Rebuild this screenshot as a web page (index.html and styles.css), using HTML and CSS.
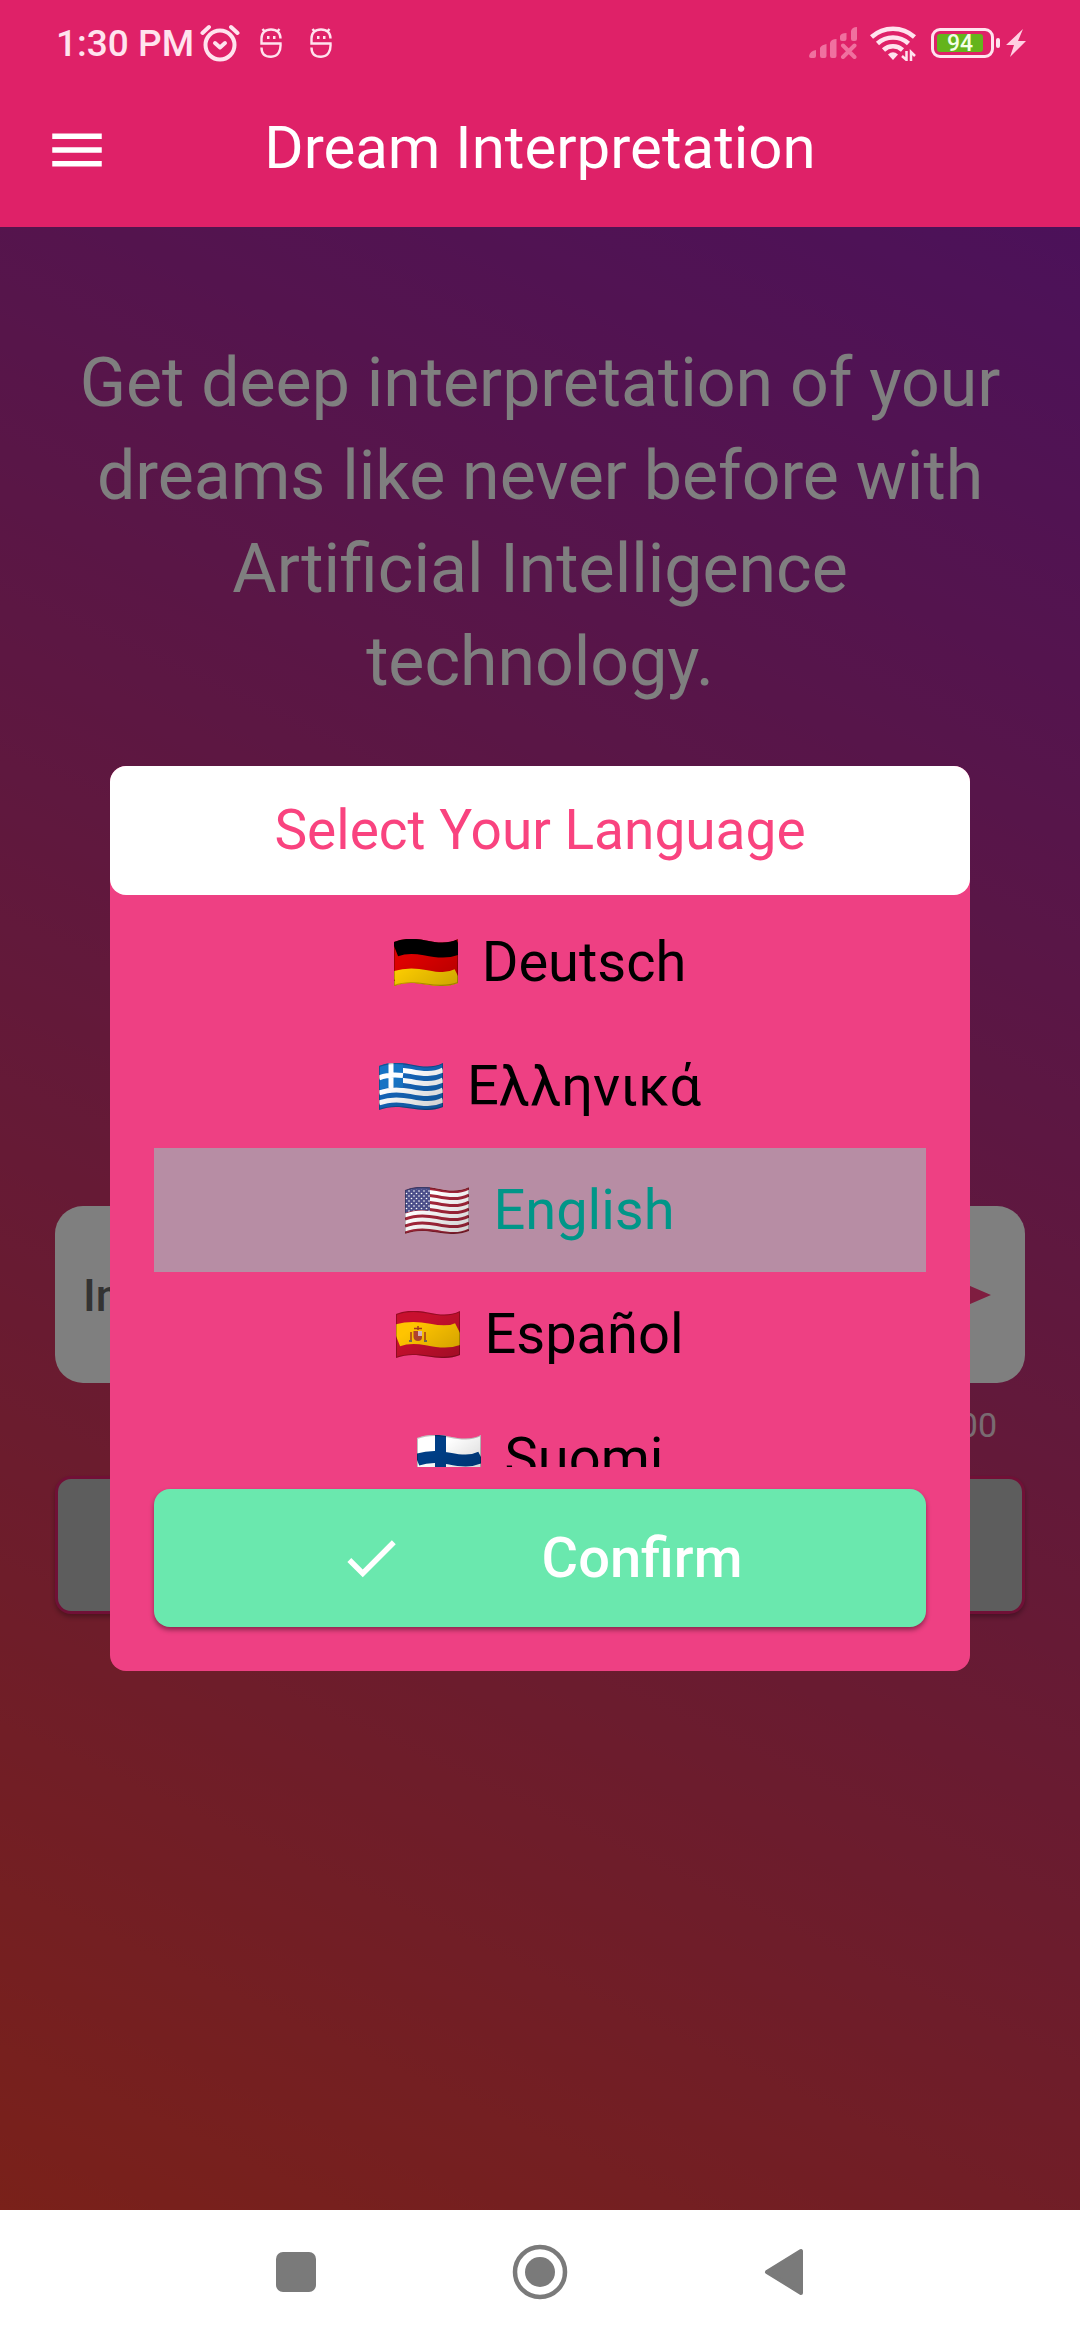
FILE: index.html
```html
<!DOCTYPE html>
<html lang="en">
<head>
    <meta charset="UTF-8">
    <meta name="viewport" content="width=device-width, initial-scale=1.0">
    <title>Dream Interpretation</title>
    <link rel="stylesheet" href="styles.css">
</head>
<body>
    <!-- Shared shapes for the flags -->
    <svg class="defs" aria-hidden="true">
        <defs>
            <path id="wave" d="M0 3C10 -1 20 -1 32 1.5S54 5 64 0"/>
            <clipPath id="flagClip">
                <path d="M0 3C10 -1 20 -1 32 1.5S54 5 64 0V44C54 48 44 47.5 32 45.5S10 43 0 47Z"/>
            </clipPath>
            <linearGradient id="flagShade" x1="0" y1="0" x2="1" y2="1">
                <stop offset="0.3" stop-color="#000" stop-opacity="0"/>
                <stop offset="1" stop-color="#000" stop-opacity="0.2"/>
            </linearGradient>
            <pattern id="stars" width="5" height="5" patternUnits="userSpaceOnUse">
                <circle cx="1.5" cy="1.5" r="0.8" fill="#fff"/>
                <circle cx="4" cy="4" r="0.8" fill="#fff"/>
            </pattern>
            <g id="shade">
                <rect width="64" height="47" fill="url(#flagShade)"/>
                <path d="M0 3C10 -1 20 -1 32 1.5S54 5 64 0V44C54 48 44 47.5 32 45.5S10 43 0 47Z" fill="none" stroke="#000" stroke-opacity="0.25" stroke-width="2"/>
            </g>
        </defs>
    </svg>

    <header class="top">
        <div class="status-bar">
            <div class="status-left">
                <span class="time">1:30 PM</span>
                <svg class="icon-alarm" viewBox="0 0 40 38" fill="none" stroke="#ffe3ee" stroke-linecap="round" aria-hidden="true">
                    <circle cx="20" cy="21" r="14.5" stroke-width="4"/>
                    <path d="M2.5 9L9 3M37.5 9L31 3" stroke-width="4"/>
                    <path d="M15 19L20 23.5L25 19" stroke-width="4" stroke-linejoin="round"/>
                </svg>
                <svg class="icon-bot" viewBox="0 0 22 30" fill="none" stroke="#ffe3ee" stroke-width="2.4" aria-hidden="true">
                    <path d="M20.5 10.5C20.5 5 17 1.5 11 1.5S1.5 5 1.5 10.5V15.5H20.5C21 23 18 28.8 11 28.8S1.5 25 1.5 19.5M2.5 1L5 4M19.5 1L17 4"/>
                    <path d="M7 9.5h2.5M13 9.5h2.5" stroke-width="3"/>
                </svg>
                <svg class="icon-bot" viewBox="0 0 22 30" fill="none" stroke="#ffe3ee" stroke-width="2.4" aria-hidden="true">
                    <path d="M20.5 10.5C20.5 5 17 1.5 11 1.5S1.5 5 1.5 10.5V15.5H20.5C21 23 18 28.8 11 28.8S1.5 25 1.5 19.5M2.5 1L5 4M19.5 1L17 4"/>
                    <path d="M7 9.5h2.5M13 9.5h2.5" stroke-width="3"/>
                </svg>
            </div>
            <div class="status-right">
                <svg class="icon-signal" viewBox="0 0 48 32" fill="#f0709f" aria-hidden="true">
                    <path d="M0 29Q1 24 7 23V29Q7 31 5 31H2Q0 31 0 29ZM11 21Q12 18 17.5 17V29Q17.5 31 15.5 31H13Q11 31 11 29ZM21 16Q22 12 27.5 12V29Q27.5 31 25.5 31H23Q21 31 21 29ZM31 9Q32 6 37.5 6V12Q37.5 14 35.5 14H33Q31 14 31 12ZM42 4Q43 0 48 0V12Q48 14 46 14H44Q42 14 42 12Z"/>
                    <path d="M34 18.5L45.5 30M45.5 18.5L34 30" stroke="#f0709f" stroke-width="4" stroke-linecap="round"/>
                </svg>
                <svg class="icon-wifi" viewBox="0 0 46 36" fill="none" stroke="#ffe3ee" stroke-width="4.6" aria-hidden="true">
                    <path d="M1.5 12A32 32 0 0 1 44.5 12M7.5 18.5A23 23 0 0 1 38.5 18.5M13.5 25A14 14 0 0 1 32.5 25"/>
                    <path d="M18 29.5Q23 25 28 29.5L23 35Z" fill="#ffe3ee" stroke="none"/>
                    <path d="M36.5 26V35L32 31M41 36V27L45 31" stroke-width="2.5"/>
                </svg>
                <div class="battery"><span class="battery-level">94</span></div>
                <svg class="icon-bolt" viewBox="0 0 20 28" fill="#ffd0e2" aria-hidden="true">
                    <path d="M17 0L0 16H8L4 28L20 12H12Z"/>
                </svg>
            </div>
        </div>
        <nav class="app-bar">
            <button class="menu-button" type="button" aria-label="Menu">
                <svg viewBox="0 0 24 24" fill="#fff" aria-hidden="true">
                    <path d="M3 18h18v-2H3v2zm0-5h18v-2H3v2zm0-7v2h18V6H3z"/>
                </svg>
            </button>
            <h1>Dream Interpretation</h1>
        </nav>
    </header>

    <main>
        <p class="intro">Get deep interpretation of your dreams like never before with Artificial Intelligence technology.</p>
        <form class="dream-form">
            <div class="dream-box">
                <input type="text" class="dream-input" placeholder="Insert your dream" aria-label="Your dream">
                <button class="send-button" type="button" aria-label="Send">
                    <svg viewBox="0 0 66 66" fill="#ff3b80" aria-hidden="true">
                        <path d="M4 8L62 33L4 58L14 33Z"/>
                    </svg>
                </button>
            </div>
            <div class="counter">0/1000</div>
            <button class="interpret-button" type="button" aria-label="Interpret"></button>
        </form>

        <div class="overlay">
            <div class="dialog" role="dialog" aria-labelledby="dialogTitle">
                <h2 id="dialogTitle">Select Your Language</h2>
                <div class="languages" role="radiogroup" aria-labelledby="dialogTitle">
                    <label class="language">
                        <input type="radio" name="language" value="de">
                        <svg class="flag" viewBox="0 0 64 47" aria-hidden="true">
                            <g clip-path="url(#flagClip)">
                                <rect width="64" height="47" fill="#d00"/>
                                <use href="#wave" y="4" fill="none" stroke="#000" stroke-width="22"/>
                                <use href="#wave" y="37" fill="none" stroke="#ffce00" stroke-width="15"/>
                                <rect y="42" width="64" height="5" fill="#ffce00"/>
                                <use href="#shade"/>
                            </g>
                        </svg>
                        <span>Deutsch</span>
                    </label>
                    <label class="language">
                        <input type="radio" name="language" value="el">
                        <svg class="flag" viewBox="0 0 64 47" aria-hidden="true">
                            <g clip-path="url(#flagClip)" fill="none">
                                <rect width="64" height="47" fill="#1565b8"/>
                                <g stroke="#fff" stroke-width="5">
                                    <use href="#wave" y="7"/>
                                    <use href="#wave" y="17"/>
                                    <use href="#wave" y="27"/>
                                    <use href="#wave" y="37"/>
                                </g>
                                <path d="M0 0H24V25C16 23 8 24 0 27Z" fill="#1874c4"/>
                                <path d="M0 15C8 11.5 16 11.5 24 12.5M12 0V25" stroke="#fff" stroke-width="5"/>
                                <use href="#shade"/>
                            </g>
                        </svg>
                        <span>Ελληνικά</span>
                    </label>
                    <label class="language">
                        <input type="radio" name="language" value="en" checked>
                        <svg class="flag" viewBox="0 0 64 47" aria-hidden="true">
                            <g clip-path="url(#flagClip)" fill="none">
                                <rect width="64" height="47" fill="#fff"/>
                                <g stroke="#a5263a" stroke-width="3">
                                    <use href="#wave" y="1"/>
                                    <use href="#wave" y="8"/>
                                    <use href="#wave" y="15"/>
                                    <use href="#wave" y="22"/>
                                    <use href="#wave" y="29"/>
                                    <use href="#wave" y="36"/>
                                    <use href="#wave" y="43"/>
                                </g>
                                <path d="M0 0H25V24C16 22 8 23 0 26Z" fill="#4c4f8a"/>
                                <path d="M0 2H25V24C16 22 8 23 0 26Z" fill="url(#stars)"/>
                                <use href="#shade"/>
                            </g>
                        </svg>
                        <span>English</span>
                    </label>
                    <label class="language">
                        <input type="radio" name="language" value="es">
                        <svg class="flag" viewBox="0 0 64 47" aria-hidden="true">
                            <g clip-path="url(#flagClip)" fill="none">
                                <rect width="64" height="47" fill="#c8102e"/>
                                <use href="#wave" y="22" stroke="#ffc400" stroke-width="22"/>
                                <path d="M17.5 20H26V26Q26 30 22 30T17.5 26Z" fill="#b5452f"/>
                                <path d="M22 20h4v5h-4z" fill="#d9b8c0"/>
                                <path d="M18 17.5H26M22 15V19M15 21V29M29 21V29" stroke="#a8391f" stroke-width="1.5"/>
                                <path d="M13 30h3M28 30h3" stroke="#44507a" stroke-width="1.5"/>
                                <use href="#shade"/>
                            </g>
                        </svg>
                        <span>Español</span>
                    </label>
                    <label class="language">
                        <input type="radio" name="language" value="fi">
                        <svg class="flag" viewBox="0 0 64 47" aria-hidden="true">
                            <g clip-path="url(#flagClip)" fill="none">
                                <rect width="64" height="47" fill="#fff"/>
                                <use href="#wave" y="22" stroke="#003e86" stroke-width="12"/>
                                <path d="M23.5 0V47" stroke="#003e86" stroke-width="11"/>
                                <use href="#shade"/>
                            </g>
                        </svg>
                        <span>Suomi</span>
                    </label>
                </div>
                <button class="confirm-button" type="button">
                    <svg viewBox="0 0 24 24" fill="#fff" aria-hidden="true">
                        <path d="M9 16.17L4.83 12l-1.42 1.41L9 19 21 7l-1.41-1.41z"/>
                    </svg>
                    <span>Confirm</span>
                </button>
            </div>
        </div>
    </main>

    <footer class="nav-bar">
        <button type="button" aria-label="Recent apps">
            <svg viewBox="0 0 60 60" fill="#7a7a7a" aria-hidden="true"><rect x="10" y="10" width="40" height="40" rx="7"/></svg>
        </button>
        <button type="button" aria-label="Home">
            <svg viewBox="0 0 60 60" fill="#7a7a7a" aria-hidden="true">
                <circle cx="30" cy="30" r="25" fill="none" stroke="#7a7a7a" stroke-width="4.5"/>
                <circle cx="30" cy="30" r="15"/>
            </svg>
        </button>
        <button type="button" aria-label="Back">
            <svg viewBox="0 0 60 60" fill="#7a7a7a" stroke="#7a7a7a" stroke-width="4" stroke-linejoin="round" aria-hidden="true"><path d="M13 30L47 9V51Z"/></svg>
        </button>
    </footer>
</body>
</html>
```
FILE: styles.css
```css
* {
    box-sizing: border-box;
}

body {
    font-family: Roboto, 'Noto Sans', sans-serif;
    margin: 0;
    min-height: 100vh;
    display: flex;
    flex-direction: column;
}

h1, h2, p {
    margin: 0;
    font-weight: 400;
}

button {
    font-family: inherit;
    border: none;
    background: none;
    padding: 0;
    cursor: pointer;
}

svg {
    display: block;
    flex: none;
}

.defs {
    position: absolute;
    width: 0;
    height: 0;
}

/* Status bar and app bar */
.top {
    background-color: #df2168;
    color: #fff;
}

.status-bar {
    display: flex;
    justify-content: space-between;
    height: 86px;
    padding: 0 54px 0 56px;
}

.status-left, .status-right {
    display: flex;
    align-items: center;
}

.time {
    font-size: 37px;
    font-weight: 500;
    color: #ffe3ee;
}

.icon-alarm {
    width: 40px;
    height: 38px;
    margin-left: 6px;
}

.icon-bot {
    width: 22px;
    height: 30px;
    margin-left: 20px;
}

.icon-bot + .icon-bot {
    margin-left: 28px;
}

.icon-signal {
    width: 48px;
    height: 32px;
}

.icon-wifi {
    width: 46px;
    height: 36px;
    margin: 0 15px 0 13px;
}

.battery {
    position: relative;
    width: 63px;
    height: 30px;
    padding: 3px;
    border: 3px solid #ffe3ee;
    border-radius: 9px;
}

.battery::after {
    content: "";
    position: absolute;
    top: 7px;
    right: -9px;
    width: 4px;
    height: 10px;
    border-radius: 2px;
    background-color: #ffe3ee;
}

.battery-level {
    display: block;
    width: 46px;
    height: 18px;
    border-radius: 3px;
    background-color: #64b41c;
    color: #f4ffe8;
    font-size: 23px;
    font-weight: 500;
    line-height: 20px;
    text-align: center;
}

.icon-bolt {
    width: 20px;
    height: 28px;
    margin-left: 12px;
}

.app-bar {
    display: grid;
    grid-template-columns: 66px 1fr 66px;
    align-items: center;
    height: 141px;
    padding: 0 44px 14px;
}

.menu-button, .menu-button svg {
    width: 66px;
    height: 66px;
}

.app-bar h1 {
    padding-bottom: 3px;
    font-size: 60px;
    line-height: 66px;
    text-align: center;
}

/* Page content */
main {
    position: relative;
    flex: 1;
    padding: 110px 55px 0;
    background: linear-gradient(205deg, #9823b4, #f44234);
}

.intro {
    padding: 0 20px;
    color: #fff;
    font-size: 68px;
    line-height: 93px;
    text-align: center;
}

.dream-form {
    margin-top: 497px;
}

.dream-box {
    display: flex;
    align-items: center;
    height: 177px;
    padding: 0 30px 0 28px;
    border-radius: 28px;
    background-color: #fff;
}

.dream-input {
    flex: 1;
    min-width: 0;
    border: none;
    background: none;
    padding: 2px 0 0;
    font-family: inherit;
    font-size: 45px;
    font-weight: 500;
}

.dream-input::placeholder {
    color: #666;
}

.send-button svg {
    width: 66px;
    height: 66px;
}

.counter {
    padding: 22px 28px 0;
    color: #fff;
    font-size: 34px;
    line-height: 40px;
    text-align: right;
    opacity: 0.8;
}

.interpret-button {
    display: block;
    width: 100%;
    height: 138px;
    margin-top: 31px;
    border: 3px solid #e0206c;
    border-radius: 16px;
    background-color: #bababa;
    box-shadow: 0 3px 5px rgba(0, 0, 0, 0.3);
}

/* Language picker */
.overlay {
    position: absolute;
    inset: 0;
    display: flex;
    align-items: center;
    justify-content: center;
    padding: 0 110px;
    background-color: rgba(0, 0, 0, 0.5);
}

.dialog {
    flex: 1;
    padding-bottom: 44px;
    border-radius: 16px;
    background-color: #ee4083;
}

.dialog h2 {
    padding: 32px 0;
    border-radius: 16px;
    background-color: #fff;
    color: #f9437f;
    font-size: 55px;
    line-height: 65px;
    text-align: center;
}

.languages {
    height: 572px;
    margin: 0 44px 22px;
    padding-top: 5px;
    overflow-y: auto;
    scrollbar-width: none;
}

.language {
    display: flex;
    align-items: center;
    justify-content: center;
    gap: 24px;
    position: relative;
    height: 124px;
    color: #000;
    font-size: 56px;
    line-height: 66px;
}

.language input {
    position: absolute;
    opacity: 0;
}

.language:has(input:checked) {
    background-color: #b78da4;
    color: #009688;
}

.flag {
    width: 64px;
    height: 47px;
}

.confirm-button {
    display: flex;
    align-items: center;
    justify-content: center;
    gap: 138px;
    width: calc(100% - 88px);
    height: 138px;
    margin: 0 44px;
    border-radius: 16px;
    background-color: #6ae8ae;
    box-shadow: 0 3px 5px rgba(0, 0, 0, 0.4);
    color: #fff;
    font-size: 56px;
    font-weight: 500;
}

.confirm-button svg {
    width: 66px;
    height: 66px;
}

/* System navigation */
.nav-bar {
    display: flex;
    align-items: center;
    justify-content: center;
    gap: 184px;
    height: 130px;
    padding-bottom: 6px;
    background-color: #fff;
}

.nav-bar svg {
    width: 60px;
    height: 60px;
}
```
